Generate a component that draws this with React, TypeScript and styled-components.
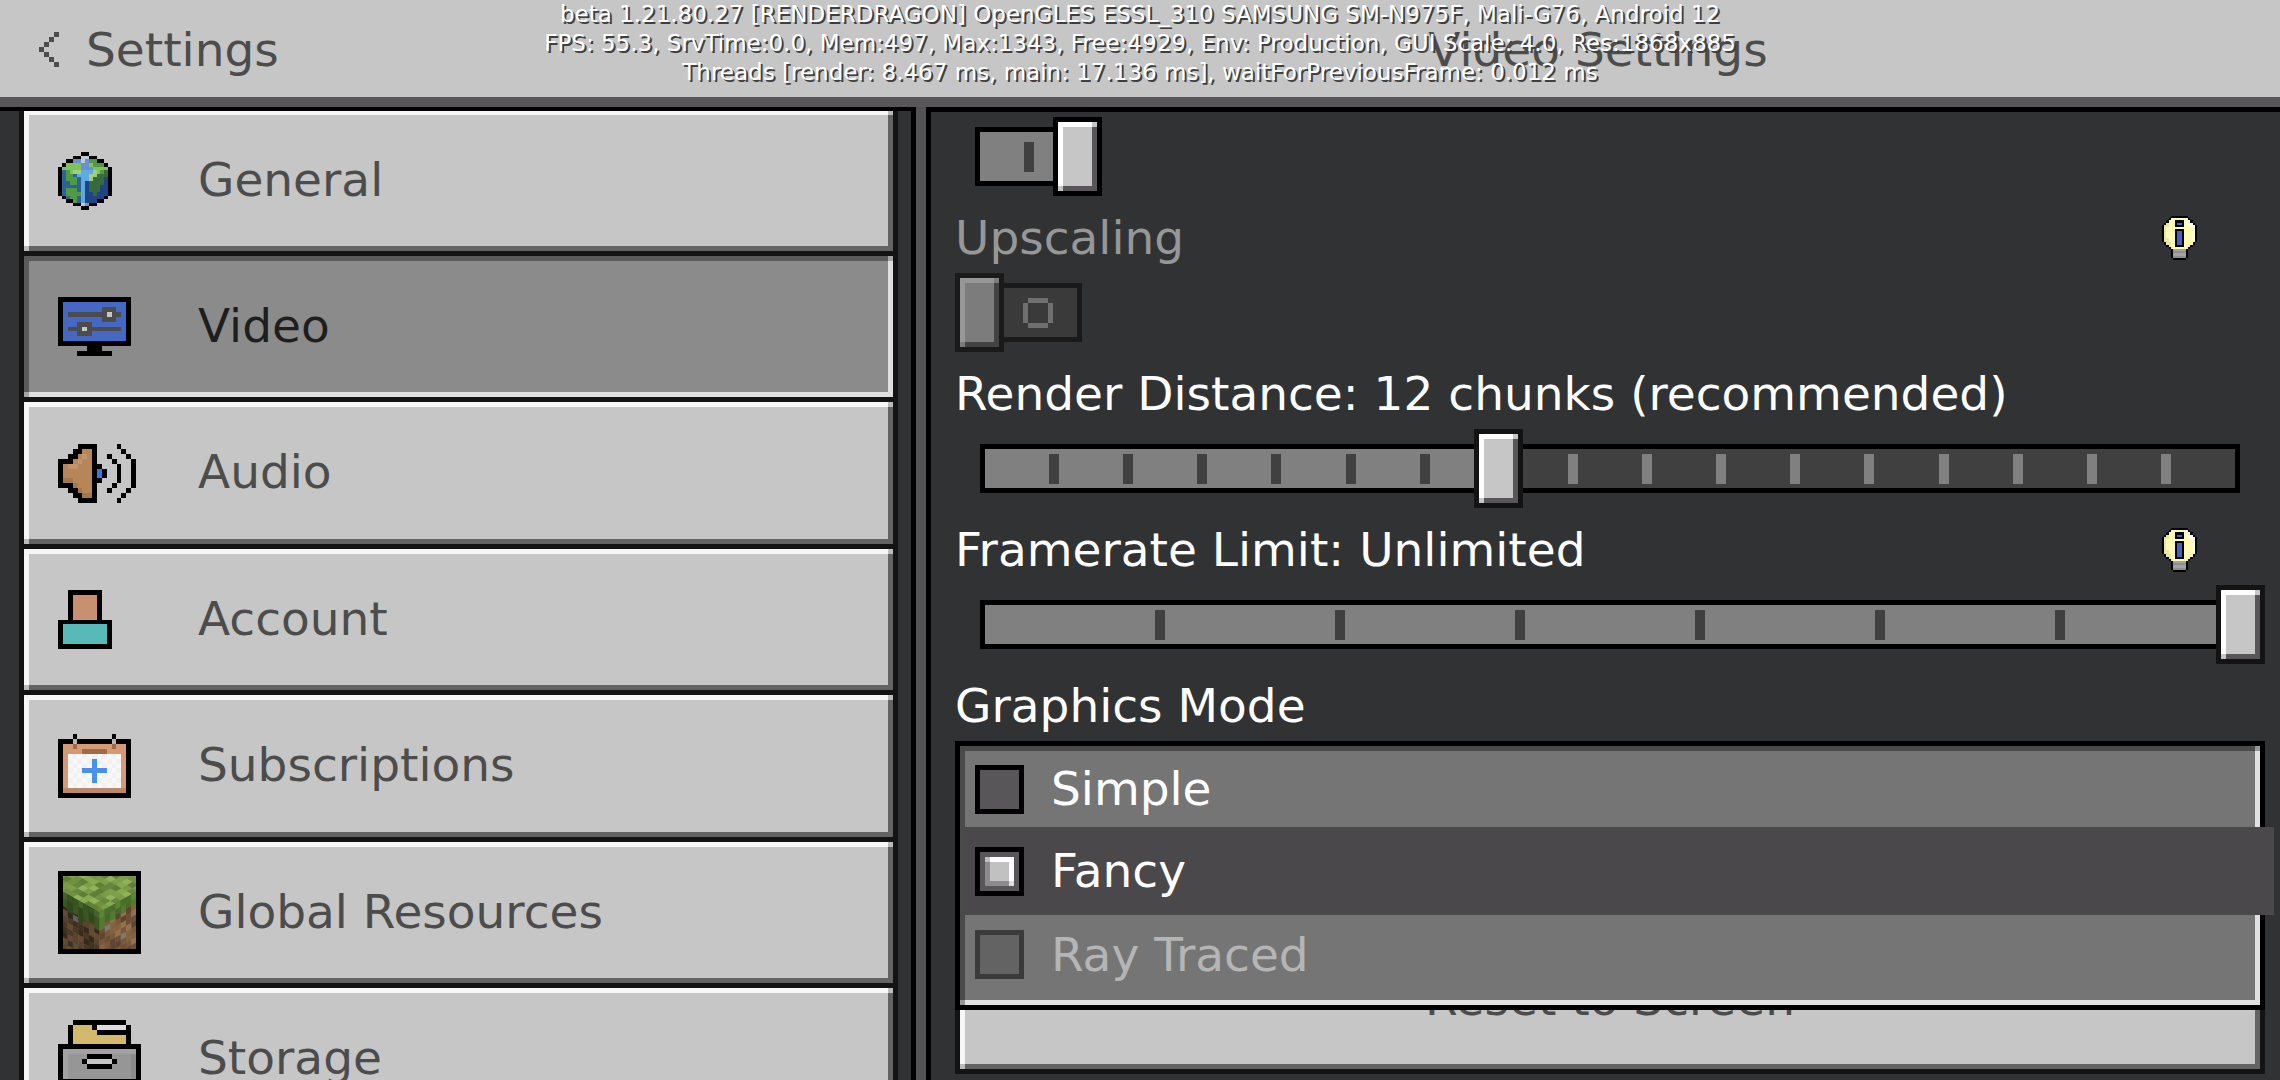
import React, { useState } from "react";
import styled, { createGlobalStyle, css } from "styled-components";

const GlobalStyle = createGlobalStyle`
  * { box-sizing: border-box; }
  body {
    margin: 0;
    background: #313233;
    font-family: "DejaVu Sans", Verdana, sans-serif;
    font-size: 47px;
    line-height: 56px;
    color: #ffffff;
    overflow: hidden;
  }
  button { font: inherit; color: inherit; border: 0; padding: 0; margin: 0; cursor: pointer; }
  input { margin: 0; cursor: pointer; }
  input:disabled { cursor: default; }
`;

/* Square-cornered bevel: light on two sides, dark on the other two. */
const bevel = (topLeft: string, bottomRight: string, corner: string, face: string) => css`
  background:
    linear-gradient(${corner}, ${corner}) 0 100% / 5px 5px no-repeat padding-box,
    linear-gradient(${corner}, ${corner}) 100% 0 / 5px 5px no-repeat padding-box,
    linear-gradient(${topLeft}, ${topLeft}) 0 0 / 100% 5px no-repeat padding-box,
    linear-gradient(${topLeft}, ${topLeft}) 0 0 / 5px 100% no-repeat padding-box,
    linear-gradient(${bottomRight}, ${bottomRight}) 0 100% / 100% 5px no-repeat padding-box,
    linear-gradient(${bottomRight}, ${bottomRight}) 100% 0 / 5px 100% no-repeat padding-box,
    ${face};
`;

/* ---------- pixel icons ---------- */

type Palette = Record<string, string>;

const PixelIcon = ({ rows, palette, width, height }: {
  rows: string[]; palette: Palette; width: number; height: number;
}) => {
  const runs: React.ReactElement[] = [];
  rows.forEach((row, y) => {
    let x = 0;
    while (x < row.length) {
      const key = row[x];
      let end = x + 1;
      while (end < row.length && row[end] === key) end += 1;
      if (key !== ".") {
        runs.push(<rect key={`${x}-${y}`} x={x} y={y} width={end - x} height={1} fill={palette[key]} />);
      }
      x = end;
    }
  });
  return (
    <svg
      width={width}
      height={height}
      viewBox={`0 0 ${rows[0].length} ${rows.length}`}
      preserveAspectRatio="none"
      shapeRendering="crispEdges"
      aria-hidden="true"
    >
      {runs}
    </svg>
  );
};

const Chevron = () => (
  <PixelIcon
    width={20}
    height={35}
    palette={{ K: "#4c4c4c" }}
    rows={["...K", "..K.", ".K..", "K...", ".K..", "..K.", "...K"]}
  />
);

const GlobeIcon = () => (
  <PixelIcon
    width={54}
    height={58}
    palette={{
      K: "#000", L: "#7cc35e", Y: "#a0d07c", G: "#4f9a45", D: "#386a40", B: "#2f6096",
      b: "#1f4587", S: "#5cabe2", P: "#6a8fce", W: "#b9ccd8", w: "#8d9297",
    }}
    rows={[
      "......KK......",
      "....KKWWKK....",
      "..KKPPWPGGKK..",
      ".KLLLLPPLGGGK.",
      "KLLLLLPPPLLLLK",
      "KBGLYYSSSYLGDK",
      "KBGGBSSSYYDDDK",
      "KBGGGBSSYDDDbK",
      "KBBGGBSbDDDDbK",
      "KBBBBBSbDDDbbK",
      "KBGGGBSbDDDbbK",
      "KBGGGGSbbDbbbK",
      ".KBGGBSbbbbbK.",
      "..KKGBSbbbKK..",
      "....KKWwKK....",
      "......KK......",
    ]}
  />
);

const MonitorIcon = () => (
  <PixelIcon
    width={73}
    height={59}
    palette={{ K: "#000", B: "#4668c5", G: "#4c4c4c", W: "#c6c6c6" }}
    rows={[
      "KKKKKKKKKKKKKKK",
      "KBBBBBBBBBBBBBK",
      "KBBBBBBBBGGGBBK",
      "KBGGGGGGGGWGGBK",
      "KBBBBBBBBGGGBBK",
      "KBBBGGGBBBBBBBK",
      "KBGGGWGGGGGGGBK",
      "KBBBGGGBBBBBBBK",
      "KBBBBBBBBBBBBBK",
      "KKKKKKKKKKKKKKK",
      "......KKK......",
      "....KKKKKKK....",
    ]}
  />
);

const SpeakerIcon = () => (
  <PixelIcon
    width={78}
    height={59}
    palette={{ K: "#000", T: "#b78658", H: "#c1946a", D: "#a07a4e", B: "#3c74e8" }}
    rows={[
      "....KKKK....K...",
      "...KKTTK.....K..",
      "..KKTHTK..K...K.",
      "KKKTHTTK...K...K",
      "KTHHTTTKK...K..K",
      "KTTTTTTKBK..K..K",
      "KTTTTTTKBK..K..K",
      "KDDTTTTKK...K..K",
      "KKKDTTTK...K...K",
      "..KKDTTK..K...K.",
      "...KKDDK.....K..",
      "....KKKK....K...",
    ]}
  />
);

const AccountIcon = () => (
  <PixelIcon
    width={54}
    height={59}
    palette={{ K: "#000", F: "#c79070", T: "#58b9b9" }}
    rows={[
      "..KKKKKKK..",
      "..KFFFFFK..",
      "..KFFFFFK..",
      "..KFFFFFK..",
      "..KFFFFFK..",
      "..KFFFFFK..",
      "KKKKKKKKKKK",
      "KTTTTTTTTTK",
      "KTTTTTTTTTK",
      "KTTTTTTTTTK",
      "KTTTTTTTTTK",
      "KKKKKKKKKKK",
    ]}
  />
);

const CalendarIcon = () => (
  <PixelIcon
    width={73}
    height={64}
    palette={{ K: "#000", g: "#b4b4b4", O: "#d59a73", D: "#a06a45", o: "#bb8967", W: "#f8f8f8", w: "#f1f1f1", B: "#4790ec" }}
    rows={[
      "...K.......K...",
      "KKKgKKKKKKKgKKK",
      "KOODOOOOOOODOOK",
      "KOOOODDDDDOOOOK",
      "KOWwWwWwWwWwWOK",
      "KOwWwWwBwWwWwOK",
      "KOWwWwWBWwWwWOK",
      "KOwWwBBBBBwWwOK",
      "KOWwWwWBWwWwWOK",
      "KOwWwWwBwWwWwOK",
      "KOWwWwWwWwWwWOK",
      "KoooooooooooooK",
      "KKKKKKKKKKKKKKK",
    ]}
  />
);

const CabinetIcon = () => (
  <PixelIcon
    width={83}
    height={78}
    palette={{ K: "#000", Y: "#d3b96d", W: "#dcdcdc", l: "#a2a2a2", g: "#969696", d: "#8a8a8a", H: "#c6c6c6" }}
    rows={[
      "...KKKKKKKKKKK...",
      "..KYYYYKWWWWWWK..",
      "..KYYYYYKKKKKKK..",
      "..KYYYYYYYYYYYK..",
      "..KYYYYYYYYYYYK..",
      "KKKKKKKKKKKKKKKKK",
      "KlllllllllllllllK",
      "KlggggKKKKKggggdK",
      "KlgggKHHHHHKgggdK",
      "KlggggKKKKKggggdK",
      "KlgggggggggggggdK",
      "KlgggggggggggggdK",
      "KKKKKKKKKKKKKKKKK",
      "KlllllllllllllllK",
      "KlggggKKKKKggggdK",
      "KKKKKKKKKKKKKKKKK",
    ]}
  />
);

/* Isometric grass block: top face sheared in two directions, sides column by column. */
const leftGrass = [42, 50, 46, 58, 50, 44, 56];
const rightGrass = [56, 40, 44, 34, 42, 30, 36];
const topTones = ["#7d9f4a", "#6f9141", "#86a952", "#67883c", "#7a9c48", "#90b35b", "#5f7f38"];
const leftSoil = ["#4a3826", "#35281c", "#584331", "#3f3022", "#644a33"];
const rightSoil = ["#7a583c", "#94704f", "#5e4430", "#86623f", "#6d4d36"];

const GrassBlockIcon = () => (
  <svg width="83" height="83" viewBox="0 0 250 250" aria-hidden="true">
    <clipPath id="block-frame"><rect x="15" y="15" width="220" height="220" /></clipPath>
    <rect width="250" height="250" fill="#000" />
    <g clipPath="url(#block-frame)">
      <rect x="15" y="15" width="220" height="220" fill="#7a9c48" />
      <g transform="matrix(0.87 0.5 -0.87 0.5 125 -62)">
        {Array.from({ length: 100 }, (_, i) => {
          const c = i % 10;
          const r = Math.floor(i / 10);
          return (
            <rect key={i} x={c * 19} y={r * 19} width="20" height="20"
              fill={topTones[(c * 3 + r * 5 + ((c * r) % 4)) % topTones.length]} />
          );
        })}
      </g>
      {leftGrass.map((depth, c) => {
        const x = 13 + c * 16;
        const y = 62 + c * 9;
        return (
          <g key={c}>
            {Array.from({ length: 12 }, (_, r) => (
              <path key={r} d={`M${x} ${y + r * 17}l16.5 9v18l-16.5 -9z`}
                fill={c === 2 && r === 3 ? "#5a6067" : leftSoil[(c * 2 + r * 3 + ((c * r) % 3)) % 5]} />
            ))}
            <path d={`M${x} ${y}l16.5 9v${depth}l-16.5 -9z`} fill={c % 2 ? "#2f481c" : "#3a5722"} />
            <path d={`M${x} ${y}l16.5 9v${18}l-16.5 -9z`} fill={c % 3 ? "#37531f" : "#456528"} />
          </g>
        );
      })}
      {rightGrass.map((depth, c) => {
        const x = 125 + c * 16;
        const y = 125 - c * 9;
        return (
          <g key={c}>
            {Array.from({ length: 12 }, (_, r) => (
              <path key={r} d={`M${x} ${y + r * 17}l16.5 -9v18l-16.5 9z`}
                fill={(c === 1 && r === 3) || (c === 4 && r === 6) ? "#7d7873" : rightSoil[(c * 2 + r * 3 + ((c * r) % 3)) % 5]} />
            ))}
            <path d={`M${x} ${y}l16.5 -9v${depth}l-16.5 9z`} fill={c % 2 ? "#456b28" : "#517a2f"} />
            <path d={`M${x} ${y}l16.5 -9v${18}l-16.5 9z`} fill={c % 3 ? "#48702a" : "#5b8635"} />
          </g>
        );
      })}
    </g>
  </svg>
);

const HintIcon = () => (
  <PixelIcon
    width={35}
    height={44}
    palette={{ K: "#000", y: "#ece79f", Y: "#fffbb7", W: "#fffff0", B: "#4560bd", g: "#8c8c8c", h: "#a3a3a3" }}
    rows={[
      "....KKKKKKKK....",
      "...KYYYYYYWWK...",
      "..KYYYKKKKYWWK..",
      ".KyYYYKBBKYYWWK.",
      "KyyYYYKKKKYYYWWK",
      "KyYYYYYYYYYYYYWK",
      "KyYYYYKKKKYYYYWK",
      "KyYYYYKBBKYYYYWK",
      "KyYYYYKBBKYYYYWK",
      "KyYYYYKBBKYYYYWK",
      "KyyYYYKBBKYYYYWK",
      "KyyYYYKBBKYYYYYK",
      ".KyyYYKBBKYYYYK.",
      "..KyYYKKKKYYYK..",
      "...KyYYYYYYYK...",
      "....KhhhhhhK....",
      "....KggggggK....",
      "....KhhhhhhK....",
      "....KggggggK....",
      ".....KKKKKK.....",
    ]}
  />
);

/* ---------- layout ---------- */

const columns = "minmax(0, 916fr) 10px minmax(0, 1354fr)";

const Screen = styled.div`
  position: relative;
  height: 100vh;
  display: flex;
  flex-direction: column;
  overflow: hidden;
`;

const Header = styled.header`
  flex: none;
  display: grid;
  grid-template-columns: minmax(0, 916fr) minmax(0, 1364fr);
  align-items: center;
  height: 107px;
  padding-top: 2px;
  background: #c6c6c6;
  border-bottom: 10px solid #585658;
  color: #4c4c4c;
`;

const BackButton = styled.button`
  display: flex;
  align-items: center;
  justify-self: start;
  gap: 27px;
  padding-left: 39px;
  background: none;
`;

const Title = styled.h1`
  margin: 0;
  font-size: inherit;
  font-weight: normal;
  text-align: center;
`;

const DebugOverlay = styled.div`
  position: absolute;
  top: 0;
  left: 0;
  right: 0;
  z-index: 2;
  text-align: center;
  white-space: nowrap;
  font-size: 23px;
  line-height: 29px;
  color: #ffffff;
  text-shadow: 2px 2px 0 #3f3f3f;
  pointer-events: none;

  p { margin: 0; }
`;

const Body = styled.main`
  flex: 1;
  min-height: 0;
  display: grid;
  grid-template-columns: ${columns};
  grid-template-rows: minmax(0, 1fr);
`;

const Sidebar = styled.nav`
  display: flex;
  align-items: flex-start;
  overflow: hidden;
  border-top: 4px solid #000;
  border-right: 5px solid #000;
  padding: 0 13px 0 19px;
`;

const MenuList = styled.ul`
  flex: 1;
  list-style: none;
  margin: -1px 0 0;
  padding: 0;
  border: 0 solid #131313;
  border-width: 0 5px;
`;

const MenuItem = styled.li`
  height: 146px;
  border-bottom: 5px solid #131313;
  &:nth-child(odd):not(:first-child) { height: 147px; }
`;

const MenuButton = styled.button<{ $selected: boolean }>`
  display: grid;
  grid-template-columns: 140px minmax(0, 1fr);
  align-items: center;
  width: 100%;
  height: 100%;
  padding-left: 34px;
  text-align: left;
  ${(p) => p.$selected
    ? css`${bevel("#5a5a5a", "#dedede", "#a5a5a5", "#8b8b8b")} color: #1e1e1e;`
    : css`${bevel("#f7f7f7", "#636363", "#bbbbbb", "#c6c6c6")} color: #4c4c4c;`}
  svg { display: block; }
`;

const MenuLabel = styled.span`
  padding-bottom: 2px;
`;

const Divider = styled.div`
  background: #535355;
`;

const Content = styled.section`
  display: flex;
  flex-direction: column;
  overflow: hidden;
  border: 0 solid #000;
  border-width: 5px 0 0 5px;
  padding: 5px 15px 0 24px;
`;

const LabelRow = styled.div<{ $muted?: boolean }>`
  flex: none;
  display: flex;
  align-items: center;
  justify-content: space-between;
  height: 77px;
  padding: 7px 68px 0 0;
  white-space: nowrap;
  color: ${(p) => (p.$muted ? "#979797" : "#ffffff")};
`;

const HintButton = styled.button`
  display: flex;
  background: none;
`;

/* ---------- toggle ---------- */

const ToggleBox = styled.label<{ $on: boolean }>`
  flex: none;
  position: relative;
  display: flex;
  flex-direction: ${(p) => (p.$on ? "row" : "row-reverse")};
  align-items: center;
  align-self: flex-start;
  height: 79px;
  padding: ${(p) => (p.$on ? "0 0 0 20px" : "0 20px 0 0")};

  input { position: absolute; inset: 0; width: 100%; height: 100%; opacity: 0; }
`;

const ToggleTrack = styled.span<{ $on: boolean }>`
  display: flex;
  align-items: center;
  justify-content: ${(p) => (p.$on ? "flex-end" : "flex-start")};
  width: 78px;
  height: 59px;
  padding: ${(p) => (p.$on ? "0 19px 0 0" : "0 0 0 19px")};
  border: 5px solid ${(p) => (p.$on ? "#000" : "#191a19")};
  border-width: ${(p) => (p.$on ? "5px 0 5px 5px" : "5px 5px 5px 0")};
  background: ${(p) => (p.$on ? "#808080" : "#393a39")};
`;

const ToggleHandle = styled.span<{ $on: boolean }>`
  width: 49px;
  height: 79px;
  ${(p) => p.$on
    ? css`${bevel("#ffffff", "#585658", "#c6c6c6", "#c6c6c6")} border: 5px solid #000;`
    : css`${bevel("#979797", "#434343", "#7b7c7b", "#7b7c7b")} border: 5px solid #191a19;`}
`;

const Toggle = ({ label, checked, disabled, onChange }: {
  label: string; checked: boolean; disabled?: boolean; onChange?: (v: boolean) => void;
}) => (
  <ToggleBox $on={checked}>
    <ToggleTrack $on={checked}>
      {checked ? (
        <PixelIcon width={10} height={30} palette={{ K: "#404040" }} rows={["K"]} />
      ) : (
        <PixelIcon width={30} height={30} palette={{ K: "#6f6f6f" }}
          rows={[".KKKK.", "K....K", "K....K", "K....K", "K....K", ".KKKK."]} />
      )}
    </ToggleTrack>
    <ToggleHandle $on={checked} />
    <input type="checkbox" aria-label={label} checked={checked} disabled={disabled}
      onChange={(e) => onChange?.(e.target.checked)} />
  </ToggleBox>
);

/* ---------- slider ---------- */

const SliderBox = styled.div`
  flex: none;
  position: relative;
  height: 79px;
  padding: 15px 25px;
`;

const SliderTrack = styled.div<{ $steps: number; $value: number }>`
  display: grid;
  grid-template-columns: repeat(${(p) => p.$steps}, minmax(0, 1fr));
  align-items: center;
  height: 49px;
  box-shadow: inset 0 0 0 5px #000;
  background: linear-gradient(
    90deg,
    #808080 ${(p) => (100 * p.$value) / p.$steps}%,
    #404040 ${(p) => (100 * p.$value) / p.$steps}%
  );
`;

const Tick = styled.span<{ $passed: boolean }>`
  justify-self: end;
  width: 10px;
  height: 30px;
  margin-right: -5px;
  background: ${(p) => (p.$passed ? "#404040" : "#808080")};
`;

const thumb = css`
  appearance: none;
  width: 49px;
  height: 79px;
  border: 5px solid #131313;
  border-radius: 0;
  ${bevel("#ffffff", "#585658", "#c6c6c6", "#c6c6c6")}
`;

const SliderInput = styled.input`
  appearance: none;
  position: absolute;
  inset: 0;
  width: 100%;
  height: 100%;
  background: none;

  &::-webkit-slider-thumb { ${thumb} }
  &::-moz-range-thumb { ${thumb} box-sizing: border-box; }
`;

const Slider = ({ id, steps, value, onChange }: {
  id: string; steps: number; value: number; onChange: (v: number) => void;
}) => (
  <SliderBox>
    <SliderTrack $steps={steps} $value={value}>
      {Array.from({ length: steps - 1 }, (_, i) => <Tick key={i} $passed={i + 1 <= value} />)}
    </SliderTrack>
    <SliderInput id={id} type="range" min={0} max={steps} value={value}
      onChange={(e) => onChange(Number(e.target.value))} />
  </SliderBox>
);

/* ---------- graphics mode ---------- */

const DropdownSlot = styled.div`
  flex: none;
  position: relative;
  height: 182px;
`;

const OptionList = styled.div`
  position: absolute;
  top: 0;
  left: 0;
  right: 0;
  z-index: 1;
  padding: 5px;
  border: 5px solid #000;
  ${bevel("#4b4a4b", "#e1e1e1", "#979797", "#757575")}
`;

const Option = styled.label<{ $checked: boolean; $disabled?: boolean }>`
  display: flex;
  align-items: center;
  gap: 27px;
  height: 76px;
  padding-left: 10px;
  cursor: pointer;
  color: ${(p) => (p.$disabled ? "#b5b5b5" : "#ffffff")};
  ${(p) => p.$checked && css`
    height: 88px;
    margin-right: -19px;
    background: #4a484a;
  `}
  ${(p) => p.$disabled && css`
    height: 85px;
    padding-bottom: 6px;
    cursor: default;
  `}
`;

const Radio = styled.input`
  appearance: none;
  flex: none;
  width: 49px;
  height: 49px;
  padding: 5px;
  border: 5px solid #000;
  background: #585658;

  &:checked::before {
    content: "";
    display: block;
    width: 29px;
    height: 29px;
    background:
      linear-gradient(#bfbfbf, #bfbfbf) 0 0 / 5px 5px no-repeat,
      linear-gradient(#dddddd, #dddddd) 100% 100% / 5px 5px no-repeat,
      linear-gradient(#ffffff, #ffffff) 0 0 / 100% 5px no-repeat,
      linear-gradient(#ffffff, #ffffff) 100% 0 / 5px 100% no-repeat,
      linear-gradient(#8b8b8b, #8b8b8b) 0 0 / 5px 100% no-repeat,
      linear-gradient(#8b8b8b, #8b8b8b) 0 100% / 100% 5px no-repeat,
      #c1c1c1;
  }
  &:disabled { border-color: #3a3a3a; background: #636363; }
`;

const WideButton = styled.button`
  flex: none;
  height: 151px;
  border: 5px solid #131313;
  color: #4c4c4c;
  ${bevel("#f7f7f7", "#636363", "#bbbbbb", "#c6c6c6")}
`;

/* ---------- page ---------- */

const menu = [
  { name: "General", Icon: GlobeIcon },
  { name: "Video", Icon: MonitorIcon },
  { name: "Audio", Icon: SpeakerIcon },
  { name: "Account", Icon: AccountIcon },
  { name: "Subscriptions", Icon: CalendarIcon },
  { name: "Global Resources", Icon: GrassBlockIcon },
  { name: "Storage", Icon: CabinetIcon },
];

const modes = [
  { name: "Simple" },
  { name: "Fancy" },
  { name: "Ray Traced", disabled: true },
];

const framerates = ["30", "40", "60", "80", "120", "144", "160", "Unlimited"];

export default function App() {
  const [section, setSection] = useState("Video");
  const [smooth, setSmooth] = useState(true);
  const [distance, setDistance] = useState(7);
  const [framerate, setFramerate] = useState(7);
  const [mode, setMode] = useState("Fancy");
  const chunks = distance + 5;

  return (
    <>
      <GlobalStyle />
      <Screen>
        <Header>
          <BackButton type="button">
            <Chevron />
            <span>Settings</span>
          </BackButton>
          <Title>Video Settings</Title>
        </Header>

        <DebugOverlay>
          <p>beta 1.21.80.27 [RENDERDRAGON] OpenGLES ESSL_310 SAMSUNG SM-N975F, Mali-G76, Android 12</p>
          <p>FPS: 55.3, SrvTime:0.0, Mem:497, Max:1343, Free:4929, Env: Production, GUI Scale: 4.0, Res:1868x885</p>
          <p>Threads [render: 8.467 ms, main: 17.136 ms], waitForPreviousFrame: 0.012 ms</p>
        </DebugOverlay>

        <Body>
          <Sidebar>
            <MenuList>
              {menu.map(({ name, Icon }) => (
                <MenuItem key={name}>
                  <MenuButton type="button" $selected={name === section} onClick={() => setSection(name)}>
                    <Icon />
                    <MenuLabel>{name}</MenuLabel>
                  </MenuButton>
                </MenuItem>
              ))}
            </MenuList>
          </Sidebar>

          <Divider />

          <Content>
            <Toggle label="Smooth Lighting" checked={smooth} onChange={setSmooth} />

            <LabelRow $muted>
              <span>Upscaling</span>
              <HintButton type="button" aria-label="About Upscaling"><HintIcon /></HintButton>
            </LabelRow>
            <Toggle label="Upscaling" checked={false} disabled />

            <LabelRow>
              <label htmlFor="distance">
                Render Distance: {chunks} chunks{chunks === 12 ? " (recommended)" : ""}
              </label>
            </LabelRow>
            <Slider id="distance" steps={17} value={distance} onChange={setDistance} />

            <LabelRow>
              <label htmlFor="framerate">Framerate Limit: {framerates[framerate]}</label>
              <HintButton type="button" aria-label="About Framerate Limit"><HintIcon /></HintButton>
            </LabelRow>
            <Slider id="framerate" steps={7} value={framerate} onChange={setFramerate} />

            <LabelRow>
              <span id="graphics-mode">Graphics Mode</span>
            </LabelRow>
            <DropdownSlot>
              <OptionList role="radiogroup" aria-labelledby="graphics-mode">
                {modes.map(({ name, disabled }) => (
                  <Option key={name} $checked={mode === name} $disabled={disabled}>
                    <Radio type="radio" name="graphics-mode" checked={mode === name} disabled={disabled}
                      onChange={() => setMode(name)} />
                    <span>{name}</span>
                  </Option>
                ))}
              </OptionList>
            </DropdownSlot>
            <WideButton type="button">Reset to Screen</WideButton>
          </Content>
        </Body>
      </Screen>
    </>
  );
}
